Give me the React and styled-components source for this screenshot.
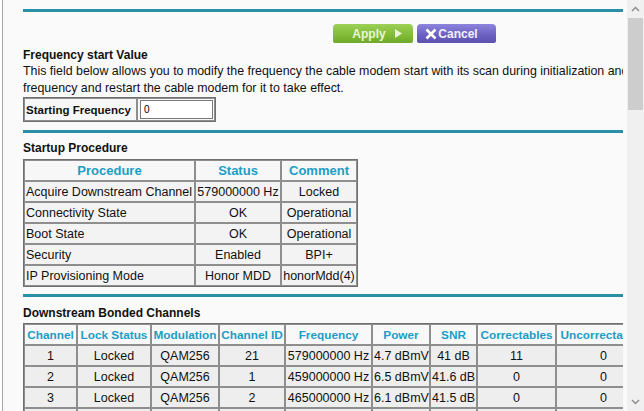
import React from "react";
import styled, { createGlobalStyle } from "styled-components";

const GlobalStyle = createGlobalStyle`
  html, body {
    margin: 0;
    padding: 0;
    width: 644px;
    height: 411px;
    overflow: hidden;
    background: #fff;
    font-family: "Liberation Sans", Arial, sans-serif;
  }
`;

const startup = [
  ["Acquire Downstream Channel", "579000000 Hz", "Locked"],
  ["Connectivity State", "OK", "Operational"],
  ["Boot State", "OK", "Operational"],
  ["Security", "Enabled", "BPI+"],
  ["IP Provisioning Mode", "Honor MDD", "honorMdd(4)"],
];

// column widths measured off the screenshot (border to border)
const startupCols = [
  ["Procedure", 171],
  ["Status", 86],
  ["Comment", 76],
];

const dsCols = [
  ["Channel", 53],
  ["Lock Status", 74],
  ["Modulation", 68],
  ["Channel ID", 66],
  ["Frequency", 87],
  ["Power", 58],
  ["SNR", 47],
  ["Correctables", 79],
  ["Uncorrectables", 95],
];

const downstream = [
  ["1", "Locked", "QAM256", "21", "579000000 Hz", "4.7 dBmV", "41 dB", "11", "0"],
  ["2", "Locked", "QAM256", "1", "459000000 Hz", "6.5 dBmV", "41.6 dB", "0", "0"],
  ["3", "Locked", "QAM256", "2", "465000000 Hz", "6.1 dBmV", "41.5 dB", "0", "0"],
  ["4", "Locked", "QAM256", "3", "471000000 Hz", "6.0 dBmV", "41.4 dB", "0", "0"],
];

const sum = (cols) => cols.reduce((a, c) => a + c[1], 0) + 2;

const Frame = styled.div`
  display: flex;
  height: 411px;
  padding-left: 2px;
  background: #fff;
`;

const Viewport = styled.div`
  flex: 1;
  border-left: 1px solid #a8a8a8;
  padding: 9px 4px 0 20px;
  overflow: hidden;
  background: #fafafa;
`;

const Content = styled.div`
  width: 600px;
  overflow: hidden;
`;

const Rule = styled.div`
  height: 3px;
  background: #2b8fa6;
  margin-top: ${(p) => p.$top || 0}px;
`;

const ButtonRow = styled.div`
  display: flex;
  gap: 4px;
  margin: 12px 0 0 310px;
`;

const Button = styled.div`
  box-sizing: border-box;
  display: flex;
  align-items: center;
  justify-content: center;
  gap: ${(p) => (p.$cancel ? 1 : 9)}px;
  width: ${(p) => (p.$cancel ? 79 : 80)}px;
  height: 19px;
  border-radius: 4px 4px 2px 2px;
  background: ${(p) =>
    p.$cancel
      ? "linear-gradient(#8d84de, #6d62c2 55%, #5c51ad)"
      : "linear-gradient(#9dd057, #82bc38 55%, #71a92b)"};
  color: ${(p) => (p.$cancel ? "#f2f0ff" : "#e9f6d8")};
  font-weight: bold;
  font-size: 12px;
  padding: ${(p) => (p.$cancel ? "0 10px 0 0" : "0 0 0 8px")};
`;

const Title = styled.div`
  font-weight: bold;
  font-size: 12px;
  line-height: 15px;
  color: #111;
  margin-top: ${(p) => p.$top || 0}px;
`;

const Para = styled.div`
  font-size: 12.4px;
  line-height: 17px;
  color: #111;
  white-space: nowrap;
`;

const Grid = styled.table`
  border-collapse: separate;
  border-spacing: 0;
  border: 1px solid #6f6f6f;
  margin-top: ${(p) => p.$top || 0}px;
  table-layout: fixed;
  width: ${(p) => (p.$width ? `${p.$width}px` : "auto")};
  flex-shrink: 0;
`;

const Cell = styled.td`
  box-sizing: border-box;
  width: ${(p) => (p.$w ? `${p.$w}px` : "auto")};
  height: ${(p) => p.$h || 21}px;
  border: 1px solid #8e8e8e;
  padding: 0 1px;
  background: ${(p) => p.$bg || "#f3f3f3"};
  color: ${(p) => (p.$head ? "#1c9dc6" : "#111")};
  font-weight: ${(p) => (p.$head || p.$bold ? "bold" : "normal")};
  font-size: ${(p) => p.$size || 12.5}px;
  text-align: ${(p) => p.$align || "center"};
  white-space: nowrap;
  overflow: hidden;
`;

const FreqInput = styled.input`
  box-sizing: border-box;
  display: block;
  width: 73px;
  height: 19px;
  margin: 0 0 0 1px;
  border: 1px solid #7a7a7a;
  background: #fff;
  font-family: "Liberation Sans", Arial, sans-serif;
  font-size: 10px;
  padding: 0 3px;
`;

const Scrollbar = styled.div`
  width: 17px;
  background: #f0f0f0;
  display: flex;
  flex-direction: column;
  align-items: center;
`;

const Arrow = styled.div`
  height: 18px;
  display: flex;
  align-items: center;
  justify-content: center;
`;

const Thumb = styled.div`
  width: 15px;
  height: 92px;
  background: #cdcdcd;
`;

const Spacer = styled.div`
  flex: 1;
`;

const Chevron = ({ down }) => (
  <svg width="9" height="6" viewBox="0 0 9 6">
    <path
      d={down ? "M1 1 L4.5 4.5 L8 1" : "M1 5 L4.5 1.5 L8 5"}
      fill="none"
      stroke="#8a8a8a"
      strokeWidth="1.4"
    />
  </svg>
);

export default function App() {
  return (
    <>
      <GlobalStyle />
      <Frame>
        <Viewport>
          <Content>
            <Rule />
            <ButtonRow>
              <Button>
                <span>Apply</span>
                <svg width="7" height="9" viewBox="0 0 7 9">
                  <path d="M0 0 L7 4.5 L0 9 Z" fill="#e9f6d8" />
                </svg>
              </Button>
              <Button $cancel>
                <svg width="12" height="12" viewBox="0 0 12 12">
                  <path d="M1.5 1.5 L10.5 10.5 M10.5 1.5 L1.5 10.5" stroke="#fff" strokeWidth="2.6" />
                </svg>
                <span>Cancel</span>
              </Button>
            </ButtonRow>

            <Title $top={5}>Frequency start Value</Title>
            <Para>
              This field below allows you to modify the frequency the cable modem start with its scan during initialization and registration. Enter the starting
              <br />
              frequency and restart the cable modem for it to take effect.
            </Para>
            <Grid $width={193}>
              <tbody>
                <tr>
                  <Cell $w={113} $h={23} $bold $size={11.5} $align="left" $bg="#f7f7f7">
                    Starting Frequency
                  </Cell>
                  <Cell $w={78} $h={23} $align="left" $bg="#f7f7f7">
                    <FreqInput defaultValue="0" />
                  </Cell>
                </tr>
              </tbody>
            </Grid>

            <Rule $top={8} />
            <Title $top={8}>Startup Procedure</Title>
            <Grid $top={3} $width={sum(startupCols)}>
              <tbody>
                <tr>
                  {startupCols.map(([name, w]) => (
                    <Cell $head $w={w} $size={13} $bg="#f7f7f7" key={name}>
                      {name}
                    </Cell>
                  ))}
                </tr>
                {startup.map((r) => (
                  <tr key={r[0]}>
                    <Cell $align="left">{r[0]}</Cell>
                    <Cell>{r[1]}</Cell>
                    <Cell>{r[2]}</Cell>
                  </tr>
                ))}
              </tbody>
            </Grid>

            <Rule $top={7} />
            <Title $top={9}>Downstream Bonded Channels</Title>
            <Grid $top={2} $width={sum(dsCols)}>
              <tbody>
                <tr>
                  {dsCols.map(([name, w]) => (
                    <Cell $head $w={w} $size={11.8} $bg="#f8f8f8" key={name}>
                      {name}
                    </Cell>
                  ))}
                </tr>
                {downstream.map((r) => (
                  <tr key={r[0]}>
                    {r.map((v, i) => (
                      <Cell $bg="#eeeeee" key={i}>
                        {v}
                      </Cell>
                    ))}
                  </tr>
                ))}
              </tbody>
            </Grid>
          </Content>
        </Viewport>
        <Scrollbar>
          <Arrow>
            <Chevron />
          </Arrow>
          <Thumb />
          <Spacer />
          <Arrow>
            <Chevron down />
          </Arrow>
        </Scrollbar>
      </Frame>
    </>
  );
}
